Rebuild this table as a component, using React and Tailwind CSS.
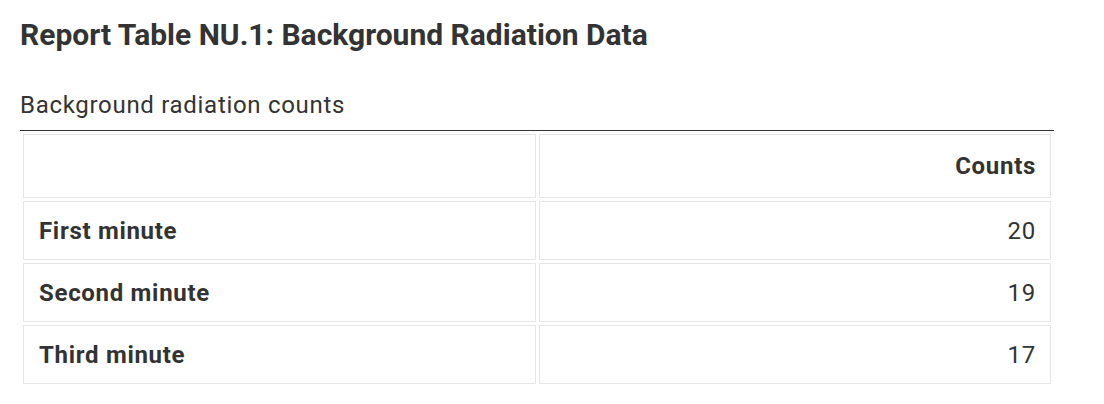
import React from "react";

const rows = [
  { label: "First minute", value: 20 },
  { label: "Second minute", value: 19 },
  { label: "Third minute", value: 17 },
];

const App = () => {
  return (
    <div className="min-h-screen bg-white text-[#333333] font-['Roboto',sans-serif] pl-[20px] pr-[50px] pt-[17px]">
      <h1 className="text-[30px] font-bold leading-[36px]">
        Report Table NU.1: Background Radiation Data
      </h1>
      <div className="mt-[38px] w-[1034px]">
        <div className="text-[24px] leading-[28px] tracking-[0.7px] pb-[11px] border-b border-[#333333]">
          Background radiation counts
        </div>
        <table className="w-full border-separate border-spacing-[3px] text-[24px] tracking-[0.7px]">
          <tbody>
            <tr>
              <td className="border border-[#e6e6e6] h-[64px] w-1/2"></td>
              <td className="border border-[#e6e6e6] h-[64px] text-right font-bold px-[14px] align-middle">
                Counts
              </td>
            </tr>
            {rows.map((row) => (
              <tr key={row.label}>
                <td className="border border-[#e6e6e6] h-[59px] font-bold px-[15px] align-middle">
                  {row.label}
                </td>
                <td className="border border-[#e6e6e6] h-[59px] text-right px-[14px] align-middle">
                  {row.value}
                </td>
              </tr>
            ))}
          </tbody>
        </table>
      </div>
    </div>
  );
};

export default App;
